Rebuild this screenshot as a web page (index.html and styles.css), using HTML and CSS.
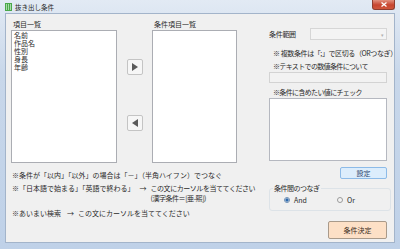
FILE: index.html
```html
<!DOCTYPE html>
<html lang="ja">
<head>
  <meta charset="UTF-8">
  <title>抜き出し条件</title>
  <link rel="stylesheet" href="styles.css">
</head>
<body>
  <div class="window">
    <div class="titlebar">
      <svg class="app-icon" width="7" height="8" viewBox="0 0 7 8">
        <rect x="0" y="0" width="7" height="8" fill="#4aa84a"/>
        <rect x="1" y="1" width="1" height="6" fill="#a8dca8"/>
        <rect x="3" y="1" width="1" height="6" fill="#a8dca8"/>
        <rect x="5" y="1" width="1" height="6" fill="#a8dca8"/>
      </svg>
      <span class="title">抜き出し条件</span>
      <span class="close">
        <svg width="6" height="5" viewBox="0 0 6 5">
          <path d="M0.5 0.5 L5.5 4.5 M5.5 0.5 L0.5 4.5" stroke="#fff" stroke-width="1.3"/>
        </svg>
      </span>
    </div>

    <div class="client">
      <div class="left">
        <div class="lists">
          <div class="col col-items">
            <div class="label">項目一覧</div>
            <div class="listbox">
              <div>名前</div>
              <div>作品名</div>
              <div>性別</div>
              <div>身長</div>
              <div>年齢</div>
            </div>
          </div>
          <div class="movers">
            <button class="arrow-btn">
              <svg width="6" height="8" viewBox="0 0 6 8"><path d="M0 0 L6 4 L0 8 Z" fill="#5a5a5a"/></svg>
            </button>
            <button class="arrow-btn arrow-back">
              <svg width="6" height="8" viewBox="0 0 6 8"><path d="M6 0 L0 4 L6 8 Z" fill="#5a5a5a"/></svg>
            </button>
          </div>
          <div class="col col-cond">
            <div class="label">条件項目一覧</div>
            <div class="listbox"></div>
          </div>
        </div>

        <div class="notes">
          <p class="note">※条件が「以内」「以外」の場合は「－」（半角ハイフン）でつなぐ</p>
          <div class="note-grid">
            <span>※「日本語で始まる」「英語で終わる」<span class="arrow">→</span></span>
            <span class="tight">この文にカーソルを当ててください</span>
            <span></span>
            <span class="tight">(漢字条件＝[亜-熙])</span>
          </div>
          <p class="note note-last">※あいまい検索<span class="arrow arrow-wide">→</span>この文にカーソルを当ててください</p>
        </div>
      </div>

      <div class="right">
        <div class="range-row">
          <span class="range-label">条件範囲</span>
          <div class="combo"><span class="combo-arrow">▾</span></div>
        </div>
        <p class="hint hint-first">※ 複数条件は「;」で区切る（ORつなぎ）</p>
        <p class="hint">※テキストでの数値条件について</p>
        <div class="textbox"></div>
        <p class="hint hint-check">※条件に含めたい値にチェック</p>
        <div class="checklist"></div>
        <button class="btn btn-set">設定</button>
        <fieldset class="group">
          <legend>条件間のつなぎ</legend>
          <label class="radio"><span class="dot checked"></span>And</label>
          <label class="radio radio-or"><span class="dot"></span>Or</label>
        </fieldset>
        <button class="btn btn-ok">条件決定</button>
      </div>
    </div>
  </div>
</body>
</html>
```

FILE: styles.css
```css
/* ダイアログ全体 */
body {
  margin: 0;
  background: #fff;
  font-family: "Noto Sans CJK JP", "Noto Sans", sans-serif;
}
p {
  margin: 0;
}
.window {
  width: 400px;
  height: 249px;
  box-sizing: border-box;
  padding: 0 5px 6px;
  display: flex;
  flex-direction: column;
  background: linear-gradient(#e2eaf4, #c8d7ea 30%, #bfd1e8);
}
.titlebar {
  height: 13px;
  display: flex;
  align-items: flex-start;
}
.app-icon {
  margin-top: 3px;
}
.title {
  margin-left: 3px;
  font-size: 6.5px;
  line-height: 14px;
  color: #1e1e1e;
}
.close {
  margin-left: auto;
  width: 23px;
  height: 10px;
  box-sizing: border-box;
  border: 1px solid #8e3d2f;
  border-top: none;
  border-radius: 0 0 3px 3px;
  background: linear-gradient(#e2917f, #c7452f 55%, #d0563c);
  display: flex;
  align-items: center;
  justify-content: center;
}

/* クライアント領域 */
.client {
  flex: 1;
  display: flex;
  box-sizing: border-box;
  padding: 4px 8px 0 5px;
  border: 1px solid #a3b4ca;
  background: #f0f0f0;
  font-size: 7px;
  color: #2a2a2a;
}
.left {
  width: 227px;
}
.lists {
  display: flex;
}
.col-items {
  width: 106px;
}
.col-cond {
  width: 85px;
}
.label {
  height: 12px;
  line-height: 12px;
  padding-left: 2px;
}
.listbox {
  height: 133px;
  box-sizing: border-box;
  border: 1px solid #abadb3;
  background: #fff;
  padding: 0 2px;
  line-height: 8px;
}
.movers {
  width: 16px;
  margin: 0 9px 0 10px;
  display: flex;
  flex-direction: column;
}
.arrow-btn {
  width: 16px;
  height: 16px;
  margin-top: 41px;
  padding: 0;
  box-sizing: border-box;
  border: 1px solid #c4c4c4;
  border-radius: 2px;
  background: #f6f6f6;
  display: flex;
  align-items: center;
  justify-content: center;
}
.arrow-back {
  margin-top: 40px;
}

.notes {
  padding-left: 1px;
  margin-top: 7px;
  line-height: 10px;
  white-space: nowrap;
}
.note-grid {
  display: grid;
  grid-template-columns: auto auto;
  justify-content: start;
  margin-top: 3px;
}
.tight {
  letter-spacing: -0.45px;
}
.arrow {
  margin: 0 4px 0 5px;
}
.arrow-wide {
  margin: 0 4px 0 6px;
}
.note-last {
  margin-top: 5px;
}

/* 右側の設定欄 */
.right {
  width: 118px;
  margin: 10px 0 0 31px;
  display: flex;
  flex-direction: column;
}
.range-row {
  display: flex;
  align-items: center;
  height: 12px;
}
.range-label {
  width: 41px;
  letter-spacing: -0.3px;
}
.combo {
  width: 77px;
  height: 12px;
  box-sizing: border-box;
  border: 1px solid #d6d6d6;
  background: #f4f4f4;
  display: flex;
  justify-content: flex-end;
  align-items: center;
}
.combo-arrow {
  font-size: 5px;
  color: #b0b0b0;
  margin-right: 2px;
}
.hint {
  padding-left: 4px;
  line-height: 10px;
  margin-top: 3px;
  white-space: nowrap;
  letter-spacing: -0.65px;
}
.hint-first {
  margin-top: 8px;
  letter-spacing: -0.4px;
}
.hint-check {
  margin-top: 4px;
}
.textbox {
  height: 11px;
  margin-top: 1px;
  box-sizing: border-box;
  border: 1px solid #d3d3d3;
  background: #f2f2f2;
}
.checklist {
  height: 63px;
  margin-top: 1px;
  box-sizing: border-box;
  border: 1px solid #b5b8c0;
  background: #fff;
}
.btn {
  align-self: flex-end;
  padding: 0;
  box-sizing: border-box;
  font-family: inherit;
  font-size: 7px;
  border-radius: 2px;
}
.btn-set {
  width: 47px;
  height: 12px;
  margin-top: 6px;
  border: 1px solid #8dbbe8;
  background: #dcedfc;
  color: #30466e;
}
.group {
  margin: 4px 0 0;
  padding: 2px 0 0 14px;
  height: 28px;
  box-sizing: border-box;
  border: 1px solid #dde3e8;
  border-radius: 3px;
  display: flex;
  align-items: center;
}
.group legend {
  padding: 0 1px;
  margin-left: -11px;
  line-height: 10px;
  letter-spacing: -0.5px;
}
.radio {
  display: flex;
  align-items: center;
  width: 53px;
}
.dot {
  width: 6px;
  height: 6px;
  box-sizing: border-box;
  margin-right: 4px;
  border: 1px solid #9a9a9a;
  border-radius: 50%;
  background: #f4f4f4;
}
.dot.checked {
  border-color: #6e8fb3;
  background: radial-gradient(circle, #2c69ad 0 1.4px, #e8eef5 1.8px);
}
.btn-ok {
  width: 59px;
  height: 18px;
  margin-top: 10px;
  border: 1px solid #a99a8a;
  background: #fde0c6;
  color: #3a2a20;
}
```
